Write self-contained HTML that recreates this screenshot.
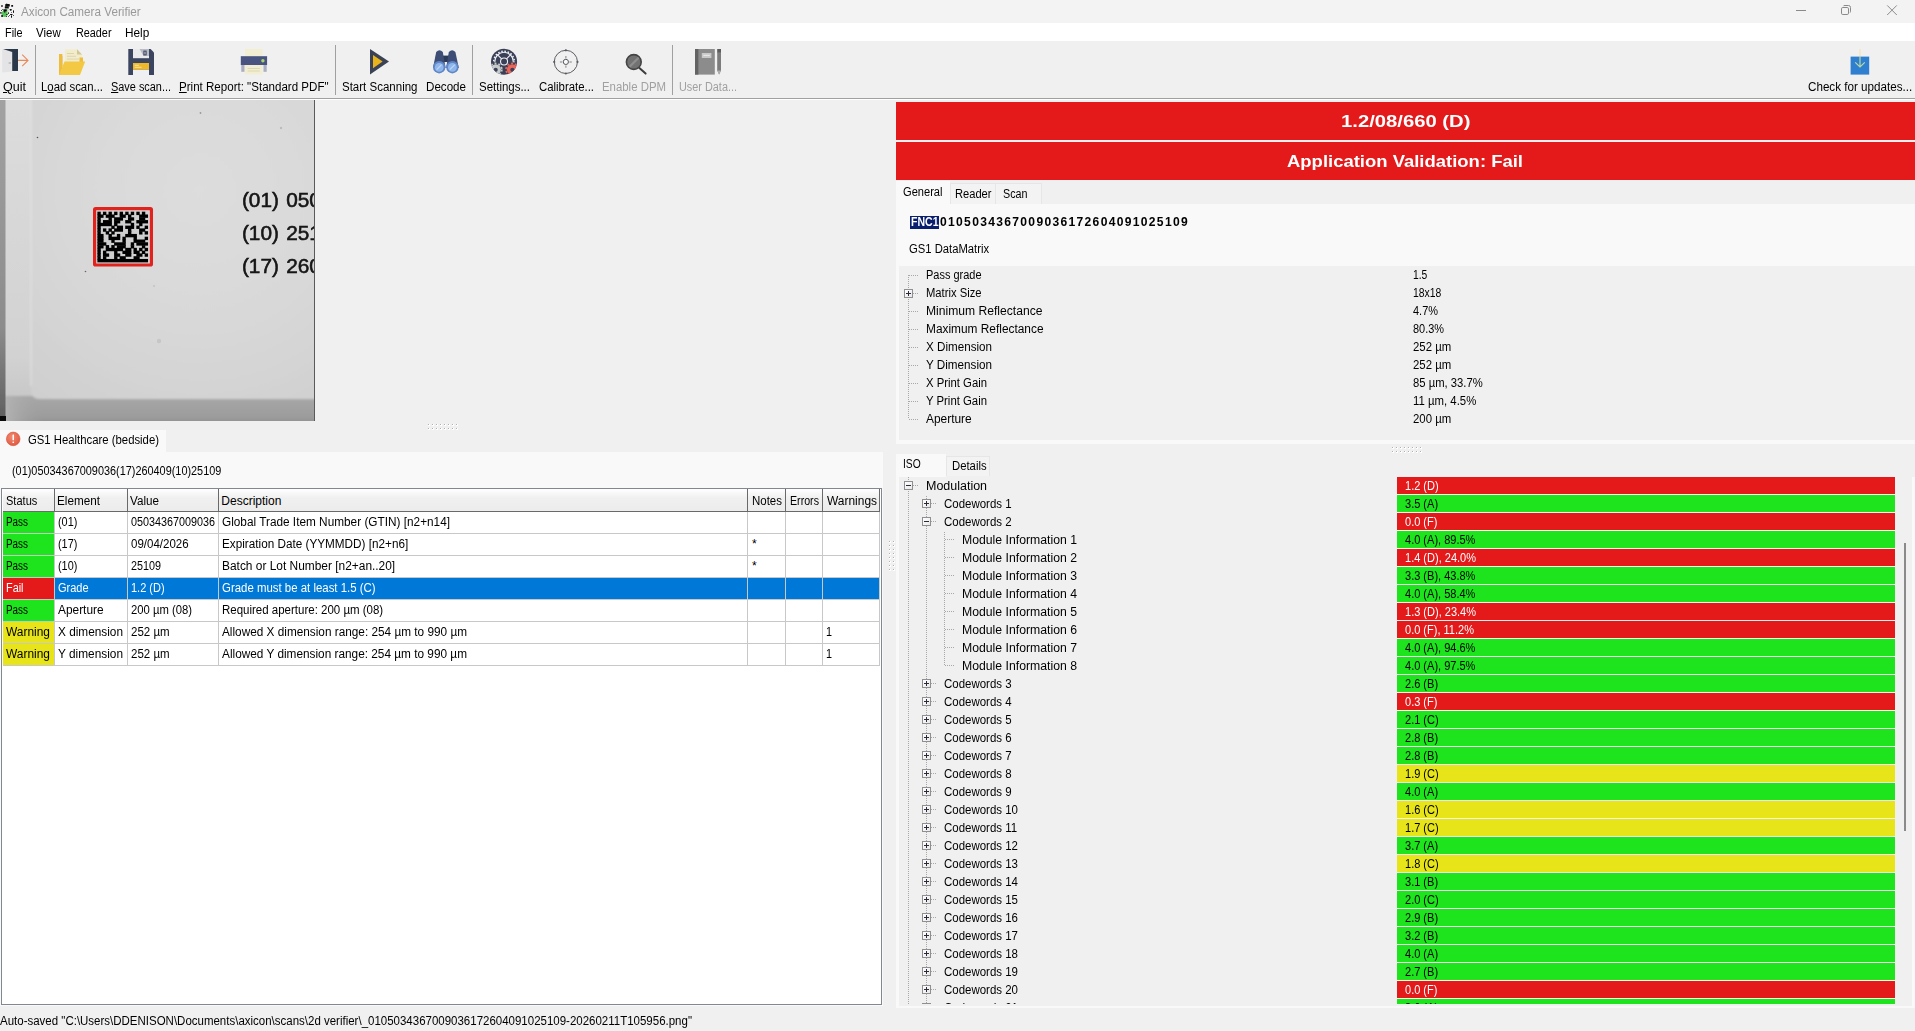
<!DOCTYPE html>
<html><head><meta charset="utf-8"><title>Axicon Camera Verifier</title>
<style>
html,body{margin:0;padding:0;}
body{width:1915px;height:1031px;overflow:hidden;background:#f0f0f0;font-family:"Liberation Sans", sans-serif;font-size:12px;position:relative;}
#app{position:absolute;left:0;top:0;width:1915px;height:1031px;overflow:hidden;}
#app div,#app span,#app svg{position:absolute;}
#app span{white-space:pre;line-height:16px;transform-origin:0 50%;}
#app u{text-decoration:underline;text-underline-offset:1px;}
</style></head><body><div id="app">
<div style="left:0px;top:0px;width:1915px;height:23px;background:#f3f3f3;"></div>
<div style="left:0px;top:23px;width:1915px;height:18px;background:#ffffff;"></div>
<div style="left:0px;top:41px;width:1915px;height:57px;background:#f0f0f0;"></div>
<div style="left:0px;top:98px;width:1915px;height:1px;background:#a0a0a0;"></div>
<div style="left:0px;top:99px;width:1915px;height:1px;background:#ffffff;"></div>
<div style="left:35px;top:45px;width:1px;height:50px;background:#a0a0a0;"></div>
<div style="left:335px;top:45px;width:1px;height:50px;background:#a0a0a0;"></div>
<div style="left:472px;top:45px;width:1px;height:50px;background:#a0a0a0;"></div>
<div style="left:672px;top:45px;width:1px;height:50px;background:#a0a0a0;"></div>
<div style="left:0px;top:430px;width:166px;height:22px;background:#f9f9f9;"></div>
<div style="left:0px;top:452px;width:883px;height:554px;background:#f9f9f9;"></div>
<div style="left:1px;top:488px;width:881px;height:517px;background:#ffffff;box-sizing:border-box;border:1px solid #828790;"></div>
<div style="left:3px;top:489px;width:877px;height:22px;background:linear-gradient(#ffffff,#f0f0f0 40%,#ececec);"></div>
<div style="left:3px;top:511px;width:877px;height:1px;background:#696969;"></div>
<div style="left:54px;top:489px;width:1px;height:22px;background:#696969;"></div>
<div style="left:127px;top:489px;width:1px;height:22px;background:#696969;"></div>
<div style="left:218px;top:489px;width:1px;height:22px;background:#696969;"></div>
<div style="left:747px;top:489px;width:1px;height:22px;background:#696969;"></div>
<div style="left:785px;top:489px;width:1px;height:22px;background:#696969;"></div>
<div style="left:822px;top:489px;width:1px;height:22px;background:#696969;"></div>
<div style="left:879px;top:489px;width:1px;height:22px;background:#696969;"></div>
<div style="left:3px;top:512px;width:51px;height:21px;background:#1de41d;"></div>
<div style="left:3px;top:533px;width:877px;height:1px;background:#c8c8c8;"></div>
<div style="left:3px;top:534px;width:51px;height:21px;background:#1de41d;"></div>
<div style="left:3px;top:555px;width:877px;height:1px;background:#c8c8c8;"></div>
<div style="left:3px;top:556px;width:51px;height:21px;background:#1de41d;"></div>
<div style="left:3px;top:577px;width:877px;height:1px;background:#c8c8c8;"></div>
<div style="left:54px;top:578px;width:826px;height:21px;background:#0078d7;"></div>
<div style="left:3px;top:578px;width:51px;height:21px;background:#e41a1a;"></div>
<div style="left:3px;top:599px;width:877px;height:1px;background:#c8c8c8;"></div>
<div style="left:3px;top:600px;width:51px;height:21px;background:#1de41d;"></div>
<div style="left:3px;top:621px;width:877px;height:1px;background:#c8c8c8;"></div>
<div style="left:3px;top:622px;width:51px;height:21px;background:#e8e41a;"></div>
<div style="left:3px;top:643px;width:877px;height:1px;background:#c8c8c8;"></div>
<div style="left:3px;top:644px;width:51px;height:21px;background:#e8e41a;"></div>
<div style="left:3px;top:665px;width:877px;height:1px;background:#c8c8c8;"></div>
<div style="left:54px;top:512px;width:1px;height:154px;background:#c8c8c8;"></div>
<div style="left:127px;top:512px;width:1px;height:154px;background:#c8c8c8;"></div>
<div style="left:218px;top:512px;width:1px;height:154px;background:#c8c8c8;"></div>
<div style="left:747px;top:512px;width:1px;height:154px;background:#c8c8c8;"></div>
<div style="left:785px;top:512px;width:1px;height:154px;background:#c8c8c8;"></div>
<div style="left:822px;top:512px;width:1px;height:154px;background:#c8c8c8;"></div>
<div style="left:879px;top:512px;width:1px;height:154px;background:#c8c8c8;"></div>
<div style="left:896px;top:102px;width:1019px;height:38px;background:#e41a1a;"></div>
<div style="left:896px;top:142.4px;width:1019px;height:38px;background:#e41a1a;"></div>
<div style="left:896px;top:181px;width:54px;height:23px;background:#f9f9f9;"></div>
<div style="left:896px;top:204px;width:1019px;height:240px;background:#f9f9f9;"></div>
<div style="left:899px;top:266px;width:1016px;height:174px;background:#f0f0f0;"></div>
<div style="left:950px;top:183px;width:46px;height:21px;background:#f3f3f3;box-sizing:border-box;border:1px solid #e6e6e6;border-bottom:none;"></div>
<div style="left:996px;top:183px;width:46px;height:21px;background:#f3f3f3;box-sizing:border-box;border:1px solid #e6e6e6;border-left:none;border-bottom:none;"></div>
<div style="left:946px;top:456px;width:44px;height:20px;background:#f3f3f3;box-sizing:border-box;border:1px solid #e6e6e6;border-bottom:none;"></div>
<div style="left:910px;top:216px;width:29px;height:13px;background:#0a1e6e;"></div>
<div style="left:896px;top:454px;width:50px;height:23px;background:#f9f9f9;"></div>
<div style="left:896px;top:477px;width:1019px;height:531px;background:#f9f9f9;"></div>
<div style="left:899px;top:477px;width:1013px;height:529px;background:#f0f0f0;"></div>
<div style="left:1397px;top:477px;width:498px;height:17px;background:#e41a1a;"></div>
<div style="left:1397px;top:495px;width:498px;height:17px;background:#1de41d;"></div>
<div style="left:1397px;top:513px;width:498px;height:17px;background:#e41a1a;"></div>
<div style="left:1397px;top:531px;width:498px;height:17px;background:#1de41d;"></div>
<div style="left:1397px;top:549px;width:498px;height:17px;background:#e41a1a;"></div>
<div style="left:1397px;top:567px;width:498px;height:17px;background:#1de41d;"></div>
<div style="left:1397px;top:585px;width:498px;height:17px;background:#1de41d;"></div>
<div style="left:1397px;top:603px;width:498px;height:17px;background:#e41a1a;"></div>
<div style="left:1397px;top:621px;width:498px;height:17px;background:#e41a1a;"></div>
<div style="left:1397px;top:639px;width:498px;height:17px;background:#1de41d;"></div>
<div style="left:1397px;top:657px;width:498px;height:17px;background:#1de41d;"></div>
<div style="left:1397px;top:675px;width:498px;height:17px;background:#1de41d;"></div>
<div style="left:1397px;top:693px;width:498px;height:17px;background:#e41a1a;"></div>
<div style="left:1397px;top:711px;width:498px;height:17px;background:#1de41d;"></div>
<div style="left:1397px;top:729px;width:498px;height:17px;background:#1de41d;"></div>
<div style="left:1397px;top:747px;width:498px;height:17px;background:#1de41d;"></div>
<div style="left:1397px;top:765px;width:498px;height:17px;background:#e8e41a;"></div>
<div style="left:1397px;top:783px;width:498px;height:17px;background:#1de41d;"></div>
<div style="left:1397px;top:801px;width:498px;height:17px;background:#e8e41a;"></div>
<div style="left:1397px;top:819px;width:498px;height:17px;background:#e8e41a;"></div>
<div style="left:1397px;top:837px;width:498px;height:17px;background:#1de41d;"></div>
<div style="left:1397px;top:855px;width:498px;height:17px;background:#e8e41a;"></div>
<div style="left:1397px;top:873px;width:498px;height:17px;background:#1de41d;"></div>
<div style="left:1397px;top:891px;width:498px;height:17px;background:#1de41d;"></div>
<div style="left:1397px;top:909px;width:498px;height:17px;background:#1de41d;"></div>
<div style="left:1397px;top:927px;width:498px;height:17px;background:#1de41d;"></div>
<div style="left:1397px;top:945px;width:498px;height:17px;background:#1de41d;"></div>
<div style="left:1397px;top:963px;width:498px;height:17px;background:#1de41d;"></div>
<div style="left:1397px;top:981px;width:498px;height:17px;background:#e41a1a;"></div>
<div style="left:1397px;top:999px;width:498px;height:5px;background:#1de41d;"></div>
<div style="left:1904px;top:543px;width:2px;height:288px;background:#8a8a8a;"></div>
<div style="left:0px;top:1006px;width:896px;height:25px;background:#f0f0f0;"></div>
<div style="left:896px;top:1008px;width:1019px;height:23px;background:#f0f0f0;"></div>
<div style="left:908px;top:275px;width:1px;height:144px;background:repeating-linear-gradient(to bottom,#a8a8a8 0 1px,transparent 1px 2px);"></div>
<div style="left:909px;top:275px;width:9px;height:1px;background:repeating-linear-gradient(to right,#a8a8a8 0 1px,transparent 1px 2px);"></div>
<div style="left:909px;top:293px;width:9px;height:1px;background:repeating-linear-gradient(to right,#a8a8a8 0 1px,transparent 1px 2px);"></div>
<div style="left:909px;top:311px;width:9px;height:1px;background:repeating-linear-gradient(to right,#a8a8a8 0 1px,transparent 1px 2px);"></div>
<div style="left:909px;top:329px;width:9px;height:1px;background:repeating-linear-gradient(to right,#a8a8a8 0 1px,transparent 1px 2px);"></div>
<div style="left:909px;top:347px;width:9px;height:1px;background:repeating-linear-gradient(to right,#a8a8a8 0 1px,transparent 1px 2px);"></div>
<div style="left:909px;top:365px;width:9px;height:1px;background:repeating-linear-gradient(to right,#a8a8a8 0 1px,transparent 1px 2px);"></div>
<div style="left:909px;top:383px;width:9px;height:1px;background:repeating-linear-gradient(to right,#a8a8a8 0 1px,transparent 1px 2px);"></div>
<div style="left:909px;top:401px;width:9px;height:1px;background:repeating-linear-gradient(to right,#a8a8a8 0 1px,transparent 1px 2px);"></div>
<div style="left:909px;top:419px;width:9px;height:1px;background:repeating-linear-gradient(to right,#a8a8a8 0 1px,transparent 1px 2px);"></div>
<div style="left:904px;top:289px;width:9px;height:9px;background:linear-gradient(135deg,#ffffff,#e8e8e8);box-sizing:border-box;border:1px solid #8f8f8f;"></div>
<div style="left:906px;top:293px;width:5px;height:1px;background:#2a2a3a;"></div>
<div style="left:908px;top:291px;width:1px;height:5px;background:#2a2a3a;"></div>
<div style="left:908px;top:477px;width:1px;height:527px;background:repeating-linear-gradient(to bottom,#a8a8a8 0 1px,transparent 1px 2px);"></div>
<div style="left:926px;top:496px;width:1px;height:508px;background:repeating-linear-gradient(to bottom,#a8a8a8 0 1px,transparent 1px 2px);"></div>
<div style="left:944px;top:532px;width:1px;height:134px;background:repeating-linear-gradient(to bottom,#a8a8a8 0 1px,transparent 1px 2px);"></div>
<div style="left:913px;top:485px;width:5px;height:1px;background:repeating-linear-gradient(to right,#a8a8a8 0 1px,transparent 1px 2px);"></div>
<div style="left:904px;top:481px;width:9px;height:9px;background:linear-gradient(135deg,#ffffff,#e8e8e8);box-sizing:border-box;border:1px solid #8f8f8f;"></div>
<div style="left:906px;top:485px;width:5px;height:1px;background:#2a2a3a;"></div>
<div style="left:931px;top:503px;width:5px;height:1px;background:repeating-linear-gradient(to right,#a8a8a8 0 1px,transparent 1px 2px);"></div>
<div style="left:922px;top:499px;width:9px;height:9px;background:linear-gradient(135deg,#ffffff,#e8e8e8);box-sizing:border-box;border:1px solid #8f8f8f;"></div>
<div style="left:924px;top:503px;width:5px;height:1px;background:#2a2a3a;"></div>
<div style="left:926px;top:501px;width:1px;height:5px;background:#2a2a3a;"></div>
<div style="left:931px;top:521px;width:5px;height:1px;background:repeating-linear-gradient(to right,#a8a8a8 0 1px,transparent 1px 2px);"></div>
<div style="left:922px;top:517px;width:9px;height:9px;background:linear-gradient(135deg,#ffffff,#e8e8e8);box-sizing:border-box;border:1px solid #8f8f8f;"></div>
<div style="left:924px;top:521px;width:5px;height:1px;background:#2a2a3a;"></div>
<div style="left:945px;top:539px;width:9px;height:1px;background:repeating-linear-gradient(to right,#a8a8a8 0 1px,transparent 1px 2px);"></div>
<div style="left:945px;top:557px;width:9px;height:1px;background:repeating-linear-gradient(to right,#a8a8a8 0 1px,transparent 1px 2px);"></div>
<div style="left:945px;top:575px;width:9px;height:1px;background:repeating-linear-gradient(to right,#a8a8a8 0 1px,transparent 1px 2px);"></div>
<div style="left:945px;top:593px;width:9px;height:1px;background:repeating-linear-gradient(to right,#a8a8a8 0 1px,transparent 1px 2px);"></div>
<div style="left:945px;top:611px;width:9px;height:1px;background:repeating-linear-gradient(to right,#a8a8a8 0 1px,transparent 1px 2px);"></div>
<div style="left:945px;top:629px;width:9px;height:1px;background:repeating-linear-gradient(to right,#a8a8a8 0 1px,transparent 1px 2px);"></div>
<div style="left:945px;top:647px;width:9px;height:1px;background:repeating-linear-gradient(to right,#a8a8a8 0 1px,transparent 1px 2px);"></div>
<div style="left:945px;top:665px;width:9px;height:1px;background:repeating-linear-gradient(to right,#a8a8a8 0 1px,transparent 1px 2px);"></div>
<div style="left:931px;top:683px;width:5px;height:1px;background:repeating-linear-gradient(to right,#a8a8a8 0 1px,transparent 1px 2px);"></div>
<div style="left:922px;top:679px;width:9px;height:9px;background:linear-gradient(135deg,#ffffff,#e8e8e8);box-sizing:border-box;border:1px solid #8f8f8f;"></div>
<div style="left:924px;top:683px;width:5px;height:1px;background:#2a2a3a;"></div>
<div style="left:926px;top:681px;width:1px;height:5px;background:#2a2a3a;"></div>
<div style="left:931px;top:701px;width:5px;height:1px;background:repeating-linear-gradient(to right,#a8a8a8 0 1px,transparent 1px 2px);"></div>
<div style="left:922px;top:697px;width:9px;height:9px;background:linear-gradient(135deg,#ffffff,#e8e8e8);box-sizing:border-box;border:1px solid #8f8f8f;"></div>
<div style="left:924px;top:701px;width:5px;height:1px;background:#2a2a3a;"></div>
<div style="left:926px;top:699px;width:1px;height:5px;background:#2a2a3a;"></div>
<div style="left:931px;top:719px;width:5px;height:1px;background:repeating-linear-gradient(to right,#a8a8a8 0 1px,transparent 1px 2px);"></div>
<div style="left:922px;top:715px;width:9px;height:9px;background:linear-gradient(135deg,#ffffff,#e8e8e8);box-sizing:border-box;border:1px solid #8f8f8f;"></div>
<div style="left:924px;top:719px;width:5px;height:1px;background:#2a2a3a;"></div>
<div style="left:926px;top:717px;width:1px;height:5px;background:#2a2a3a;"></div>
<div style="left:931px;top:737px;width:5px;height:1px;background:repeating-linear-gradient(to right,#a8a8a8 0 1px,transparent 1px 2px);"></div>
<div style="left:922px;top:733px;width:9px;height:9px;background:linear-gradient(135deg,#ffffff,#e8e8e8);box-sizing:border-box;border:1px solid #8f8f8f;"></div>
<div style="left:924px;top:737px;width:5px;height:1px;background:#2a2a3a;"></div>
<div style="left:926px;top:735px;width:1px;height:5px;background:#2a2a3a;"></div>
<div style="left:931px;top:755px;width:5px;height:1px;background:repeating-linear-gradient(to right,#a8a8a8 0 1px,transparent 1px 2px);"></div>
<div style="left:922px;top:751px;width:9px;height:9px;background:linear-gradient(135deg,#ffffff,#e8e8e8);box-sizing:border-box;border:1px solid #8f8f8f;"></div>
<div style="left:924px;top:755px;width:5px;height:1px;background:#2a2a3a;"></div>
<div style="left:926px;top:753px;width:1px;height:5px;background:#2a2a3a;"></div>
<div style="left:931px;top:773px;width:5px;height:1px;background:repeating-linear-gradient(to right,#a8a8a8 0 1px,transparent 1px 2px);"></div>
<div style="left:922px;top:769px;width:9px;height:9px;background:linear-gradient(135deg,#ffffff,#e8e8e8);box-sizing:border-box;border:1px solid #8f8f8f;"></div>
<div style="left:924px;top:773px;width:5px;height:1px;background:#2a2a3a;"></div>
<div style="left:926px;top:771px;width:1px;height:5px;background:#2a2a3a;"></div>
<div style="left:931px;top:791px;width:5px;height:1px;background:repeating-linear-gradient(to right,#a8a8a8 0 1px,transparent 1px 2px);"></div>
<div style="left:922px;top:787px;width:9px;height:9px;background:linear-gradient(135deg,#ffffff,#e8e8e8);box-sizing:border-box;border:1px solid #8f8f8f;"></div>
<div style="left:924px;top:791px;width:5px;height:1px;background:#2a2a3a;"></div>
<div style="left:926px;top:789px;width:1px;height:5px;background:#2a2a3a;"></div>
<div style="left:931px;top:809px;width:5px;height:1px;background:repeating-linear-gradient(to right,#a8a8a8 0 1px,transparent 1px 2px);"></div>
<div style="left:922px;top:805px;width:9px;height:9px;background:linear-gradient(135deg,#ffffff,#e8e8e8);box-sizing:border-box;border:1px solid #8f8f8f;"></div>
<div style="left:924px;top:809px;width:5px;height:1px;background:#2a2a3a;"></div>
<div style="left:926px;top:807px;width:1px;height:5px;background:#2a2a3a;"></div>
<div style="left:931px;top:827px;width:5px;height:1px;background:repeating-linear-gradient(to right,#a8a8a8 0 1px,transparent 1px 2px);"></div>
<div style="left:922px;top:823px;width:9px;height:9px;background:linear-gradient(135deg,#ffffff,#e8e8e8);box-sizing:border-box;border:1px solid #8f8f8f;"></div>
<div style="left:924px;top:827px;width:5px;height:1px;background:#2a2a3a;"></div>
<div style="left:926px;top:825px;width:1px;height:5px;background:#2a2a3a;"></div>
<div style="left:931px;top:845px;width:5px;height:1px;background:repeating-linear-gradient(to right,#a8a8a8 0 1px,transparent 1px 2px);"></div>
<div style="left:922px;top:841px;width:9px;height:9px;background:linear-gradient(135deg,#ffffff,#e8e8e8);box-sizing:border-box;border:1px solid #8f8f8f;"></div>
<div style="left:924px;top:845px;width:5px;height:1px;background:#2a2a3a;"></div>
<div style="left:926px;top:843px;width:1px;height:5px;background:#2a2a3a;"></div>
<div style="left:931px;top:863px;width:5px;height:1px;background:repeating-linear-gradient(to right,#a8a8a8 0 1px,transparent 1px 2px);"></div>
<div style="left:922px;top:859px;width:9px;height:9px;background:linear-gradient(135deg,#ffffff,#e8e8e8);box-sizing:border-box;border:1px solid #8f8f8f;"></div>
<div style="left:924px;top:863px;width:5px;height:1px;background:#2a2a3a;"></div>
<div style="left:926px;top:861px;width:1px;height:5px;background:#2a2a3a;"></div>
<div style="left:931px;top:881px;width:5px;height:1px;background:repeating-linear-gradient(to right,#a8a8a8 0 1px,transparent 1px 2px);"></div>
<div style="left:922px;top:877px;width:9px;height:9px;background:linear-gradient(135deg,#ffffff,#e8e8e8);box-sizing:border-box;border:1px solid #8f8f8f;"></div>
<div style="left:924px;top:881px;width:5px;height:1px;background:#2a2a3a;"></div>
<div style="left:926px;top:879px;width:1px;height:5px;background:#2a2a3a;"></div>
<div style="left:931px;top:899px;width:5px;height:1px;background:repeating-linear-gradient(to right,#a8a8a8 0 1px,transparent 1px 2px);"></div>
<div style="left:922px;top:895px;width:9px;height:9px;background:linear-gradient(135deg,#ffffff,#e8e8e8);box-sizing:border-box;border:1px solid #8f8f8f;"></div>
<div style="left:924px;top:899px;width:5px;height:1px;background:#2a2a3a;"></div>
<div style="left:926px;top:897px;width:1px;height:5px;background:#2a2a3a;"></div>
<div style="left:931px;top:917px;width:5px;height:1px;background:repeating-linear-gradient(to right,#a8a8a8 0 1px,transparent 1px 2px);"></div>
<div style="left:922px;top:913px;width:9px;height:9px;background:linear-gradient(135deg,#ffffff,#e8e8e8);box-sizing:border-box;border:1px solid #8f8f8f;"></div>
<div style="left:924px;top:917px;width:5px;height:1px;background:#2a2a3a;"></div>
<div style="left:926px;top:915px;width:1px;height:5px;background:#2a2a3a;"></div>
<div style="left:931px;top:935px;width:5px;height:1px;background:repeating-linear-gradient(to right,#a8a8a8 0 1px,transparent 1px 2px);"></div>
<div style="left:922px;top:931px;width:9px;height:9px;background:linear-gradient(135deg,#ffffff,#e8e8e8);box-sizing:border-box;border:1px solid #8f8f8f;"></div>
<div style="left:924px;top:935px;width:5px;height:1px;background:#2a2a3a;"></div>
<div style="left:926px;top:933px;width:1px;height:5px;background:#2a2a3a;"></div>
<div style="left:931px;top:953px;width:5px;height:1px;background:repeating-linear-gradient(to right,#a8a8a8 0 1px,transparent 1px 2px);"></div>
<div style="left:922px;top:949px;width:9px;height:9px;background:linear-gradient(135deg,#ffffff,#e8e8e8);box-sizing:border-box;border:1px solid #8f8f8f;"></div>
<div style="left:924px;top:953px;width:5px;height:1px;background:#2a2a3a;"></div>
<div style="left:926px;top:951px;width:1px;height:5px;background:#2a2a3a;"></div>
<div style="left:931px;top:971px;width:5px;height:1px;background:repeating-linear-gradient(to right,#a8a8a8 0 1px,transparent 1px 2px);"></div>
<div style="left:922px;top:967px;width:9px;height:9px;background:linear-gradient(135deg,#ffffff,#e8e8e8);box-sizing:border-box;border:1px solid #8f8f8f;"></div>
<div style="left:924px;top:971px;width:5px;height:1px;background:#2a2a3a;"></div>
<div style="left:926px;top:969px;width:1px;height:5px;background:#2a2a3a;"></div>
<div style="left:931px;top:989px;width:5px;height:1px;background:repeating-linear-gradient(to right,#a8a8a8 0 1px,transparent 1px 2px);"></div>
<div style="left:922px;top:985px;width:9px;height:9px;background:linear-gradient(135deg,#ffffff,#e8e8e8);box-sizing:border-box;border:1px solid #8f8f8f;"></div>
<div style="left:924px;top:989px;width:5px;height:1px;background:#2a2a3a;"></div>
<div style="left:926px;top:987px;width:1px;height:5px;background:#2a2a3a;"></div>
<div style="left:428px;top:424px;width:2px;height:2px;background:#ffffff;"></div>
<div style="left:428px;top:424px;width:1px;height:1px;background:#b0b0b0;"></div>
<div style="left:428px;top:428px;width:2px;height:2px;background:#ffffff;"></div>
<div style="left:428px;top:428px;width:1px;height:1px;background:#b0b0b0;"></div>
<div style="left:1392px;top:447px;width:2px;height:2px;background:#ffffff;"></div>
<div style="left:1392px;top:447px;width:1px;height:1px;background:#b0b0b0;"></div>
<div style="left:1392px;top:451px;width:2px;height:2px;background:#ffffff;"></div>
<div style="left:1392px;top:451px;width:1px;height:1px;background:#b0b0b0;"></div>
<div style="left:889px;top:541px;width:2px;height:2px;background:#ffffff;"></div>
<div style="left:889px;top:541px;width:1px;height:1px;background:#b0b0b0;"></div>
<div style="left:893px;top:541px;width:2px;height:2px;background:#ffffff;"></div>
<div style="left:893px;top:541px;width:1px;height:1px;background:#b0b0b0;"></div>
<div style="left:432px;top:424px;width:2px;height:2px;background:#ffffff;"></div>
<div style="left:432px;top:424px;width:1px;height:1px;background:#b0b0b0;"></div>
<div style="left:432px;top:428px;width:2px;height:2px;background:#ffffff;"></div>
<div style="left:432px;top:428px;width:1px;height:1px;background:#b0b0b0;"></div>
<div style="left:1396px;top:447px;width:2px;height:2px;background:#ffffff;"></div>
<div style="left:1396px;top:447px;width:1px;height:1px;background:#b0b0b0;"></div>
<div style="left:1396px;top:451px;width:2px;height:2px;background:#ffffff;"></div>
<div style="left:1396px;top:451px;width:1px;height:1px;background:#b0b0b0;"></div>
<div style="left:889px;top:545px;width:2px;height:2px;background:#ffffff;"></div>
<div style="left:889px;top:545px;width:1px;height:1px;background:#b0b0b0;"></div>
<div style="left:893px;top:545px;width:2px;height:2px;background:#ffffff;"></div>
<div style="left:893px;top:545px;width:1px;height:1px;background:#b0b0b0;"></div>
<div style="left:436px;top:424px;width:2px;height:2px;background:#ffffff;"></div>
<div style="left:436px;top:424px;width:1px;height:1px;background:#b0b0b0;"></div>
<div style="left:436px;top:428px;width:2px;height:2px;background:#ffffff;"></div>
<div style="left:436px;top:428px;width:1px;height:1px;background:#b0b0b0;"></div>
<div style="left:1400px;top:447px;width:2px;height:2px;background:#ffffff;"></div>
<div style="left:1400px;top:447px;width:1px;height:1px;background:#b0b0b0;"></div>
<div style="left:1400px;top:451px;width:2px;height:2px;background:#ffffff;"></div>
<div style="left:1400px;top:451px;width:1px;height:1px;background:#b0b0b0;"></div>
<div style="left:889px;top:549px;width:2px;height:2px;background:#ffffff;"></div>
<div style="left:889px;top:549px;width:1px;height:1px;background:#b0b0b0;"></div>
<div style="left:893px;top:549px;width:2px;height:2px;background:#ffffff;"></div>
<div style="left:893px;top:549px;width:1px;height:1px;background:#b0b0b0;"></div>
<div style="left:440px;top:424px;width:2px;height:2px;background:#ffffff;"></div>
<div style="left:440px;top:424px;width:1px;height:1px;background:#b0b0b0;"></div>
<div style="left:440px;top:428px;width:2px;height:2px;background:#ffffff;"></div>
<div style="left:440px;top:428px;width:1px;height:1px;background:#b0b0b0;"></div>
<div style="left:1404px;top:447px;width:2px;height:2px;background:#ffffff;"></div>
<div style="left:1404px;top:447px;width:1px;height:1px;background:#b0b0b0;"></div>
<div style="left:1404px;top:451px;width:2px;height:2px;background:#ffffff;"></div>
<div style="left:1404px;top:451px;width:1px;height:1px;background:#b0b0b0;"></div>
<div style="left:889px;top:553px;width:2px;height:2px;background:#ffffff;"></div>
<div style="left:889px;top:553px;width:1px;height:1px;background:#b0b0b0;"></div>
<div style="left:893px;top:553px;width:2px;height:2px;background:#ffffff;"></div>
<div style="left:893px;top:553px;width:1px;height:1px;background:#b0b0b0;"></div>
<div style="left:444px;top:424px;width:2px;height:2px;background:#ffffff;"></div>
<div style="left:444px;top:424px;width:1px;height:1px;background:#b0b0b0;"></div>
<div style="left:444px;top:428px;width:2px;height:2px;background:#ffffff;"></div>
<div style="left:444px;top:428px;width:1px;height:1px;background:#b0b0b0;"></div>
<div style="left:1408px;top:447px;width:2px;height:2px;background:#ffffff;"></div>
<div style="left:1408px;top:447px;width:1px;height:1px;background:#b0b0b0;"></div>
<div style="left:1408px;top:451px;width:2px;height:2px;background:#ffffff;"></div>
<div style="left:1408px;top:451px;width:1px;height:1px;background:#b0b0b0;"></div>
<div style="left:889px;top:557px;width:2px;height:2px;background:#ffffff;"></div>
<div style="left:889px;top:557px;width:1px;height:1px;background:#b0b0b0;"></div>
<div style="left:893px;top:557px;width:2px;height:2px;background:#ffffff;"></div>
<div style="left:893px;top:557px;width:1px;height:1px;background:#b0b0b0;"></div>
<div style="left:448px;top:424px;width:2px;height:2px;background:#ffffff;"></div>
<div style="left:448px;top:424px;width:1px;height:1px;background:#b0b0b0;"></div>
<div style="left:448px;top:428px;width:2px;height:2px;background:#ffffff;"></div>
<div style="left:448px;top:428px;width:1px;height:1px;background:#b0b0b0;"></div>
<div style="left:1412px;top:447px;width:2px;height:2px;background:#ffffff;"></div>
<div style="left:1412px;top:447px;width:1px;height:1px;background:#b0b0b0;"></div>
<div style="left:1412px;top:451px;width:2px;height:2px;background:#ffffff;"></div>
<div style="left:1412px;top:451px;width:1px;height:1px;background:#b0b0b0;"></div>
<div style="left:889px;top:561px;width:2px;height:2px;background:#ffffff;"></div>
<div style="left:889px;top:561px;width:1px;height:1px;background:#b0b0b0;"></div>
<div style="left:893px;top:561px;width:2px;height:2px;background:#ffffff;"></div>
<div style="left:893px;top:561px;width:1px;height:1px;background:#b0b0b0;"></div>
<div style="left:452px;top:424px;width:2px;height:2px;background:#ffffff;"></div>
<div style="left:452px;top:424px;width:1px;height:1px;background:#b0b0b0;"></div>
<div style="left:452px;top:428px;width:2px;height:2px;background:#ffffff;"></div>
<div style="left:452px;top:428px;width:1px;height:1px;background:#b0b0b0;"></div>
<div style="left:1416px;top:447px;width:2px;height:2px;background:#ffffff;"></div>
<div style="left:1416px;top:447px;width:1px;height:1px;background:#b0b0b0;"></div>
<div style="left:1416px;top:451px;width:2px;height:2px;background:#ffffff;"></div>
<div style="left:1416px;top:451px;width:1px;height:1px;background:#b0b0b0;"></div>
<div style="left:889px;top:565px;width:2px;height:2px;background:#ffffff;"></div>
<div style="left:889px;top:565px;width:1px;height:1px;background:#b0b0b0;"></div>
<div style="left:893px;top:565px;width:2px;height:2px;background:#ffffff;"></div>
<div style="left:893px;top:565px;width:1px;height:1px;background:#b0b0b0;"></div>
<div style="left:456px;top:424px;width:2px;height:2px;background:#ffffff;"></div>
<div style="left:456px;top:424px;width:1px;height:1px;background:#b0b0b0;"></div>
<div style="left:456px;top:428px;width:2px;height:2px;background:#ffffff;"></div>
<div style="left:456px;top:428px;width:1px;height:1px;background:#b0b0b0;"></div>
<div style="left:1420px;top:447px;width:2px;height:2px;background:#ffffff;"></div>
<div style="left:1420px;top:447px;width:1px;height:1px;background:#b0b0b0;"></div>
<div style="left:1420px;top:451px;width:2px;height:2px;background:#ffffff;"></div>
<div style="left:1420px;top:451px;width:1px;height:1px;background:#b0b0b0;"></div>
<div style="left:889px;top:569px;width:2px;height:2px;background:#ffffff;"></div>
<div style="left:889px;top:569px;width:1px;height:1px;background:#b0b0b0;"></div>
<div style="left:893px;top:569px;width:2px;height:2px;background:#ffffff;"></div>
<div style="left:893px;top:569px;width:1px;height:1px;background:#b0b0b0;"></div>
<div style="left:922px;top:1003px;width:9px;height:1px;background:#8f8f8f;"></div>
<svg style="left:0px;top:100px" width="315" height="321" viewBox="0 100 315 321"><defs><radialGradient id="gl" gradientUnits="userSpaceOnUse" cx="200" cy="190" r="260"><stop offset="0" stop-color="#dddddd"/><stop offset="0.55" stop-color="#d8d8d8"/><stop offset="1" stop-color="#cfcfcf"/></radialGradient><linearGradient id="gbk" x1="0" x2="0" y1="0" y2="1"><stop offset="0" stop-color="#dcdcdc"/><stop offset="0.8" stop-color="#d2d2d2"/><stop offset="1" stop-color="#c2c2c2"/></linearGradient><linearGradient id="gs" x1="0" x2="0" y1="0" y2="1"><stop offset="0" stop-color="#a2a2a2"/><stop offset="0.7" stop-color="#8c8c8c"/><stop offset="1" stop-color="#5c5c5c"/></linearGradient><linearGradient id="gb" x1="0" x2="0" y1="0" y2="1"><stop offset="0" stop-color="#a8a8a8"/><stop offset="0.7" stop-color="#9c9c9c"/><stop offset="1" stop-color="#8a8a8a"/></linearGradient><linearGradient id="gbl" x1="0" x2="1" y1="0" y2="0"><stop offset="0" stop-color="#b4b4b4" stop-opacity="1"/><stop offset="1" stop-color="#a0a0a0" stop-opacity="0"/></linearGradient><filter id="b1" x="-5%" y="-5%" width="110%" height="110%"><feGaussianBlur stdDeviation="0.55"/></filter><filter id="b2" x="-5%" y="-5%" width="110%" height="110%"><feGaussianBlur stdDeviation="0.75"/></filter><filter id="b3"><feGaussianBlur stdDeviation="1.2"/></filter></defs><rect x="0" y="100" width="315" height="321" fill="url(#gbk)"/><g filter="url(#b3)"><rect x="-4" y="396" width="325" height="30" fill="url(#gb)"/><rect x="4" y="396" width="40" height="30" fill="url(#gbl)"/><path d="M31 96 H320 V399 H40 Q31 399 31 390 Z" fill="url(#gl)"/><rect x="30.5" y="96" width="1" height="290" fill="#e6e6e6"/></g><rect x="-2" y="96" width="7.5" height="330" fill="url(#gs)" filter="url(#b2)"/><rect x="0" y="416" width="6" height="5" fill="#0a0a0a"/><circle cx="37.5" cy="137.5" r="0.8" fill="#555" filter="url(#b1)"/><circle cx="200.5" cy="113" r="0.9" fill="#999" filter="url(#b1)"/><circle cx="281" cy="128" r="1.2" fill="#bbb" filter="url(#b1)"/><circle cx="85.5" cy="271.5" r="0.8" fill="#666" filter="url(#b1)"/><circle cx="154" cy="286" r="0.7" fill="#aaa" filter="url(#b1)"/><circle cx="159" cy="341" r="2.2" fill="#c6c6c6" filter="url(#b1)"/><g filter="url(#b2)"><rect x="96.7" y="211.0" width="52.04" height="52.04" fill="#cfcfcf"/><rect x="97.40" y="211.70" width="3.38" height="3.38" fill="#050505"/><rect x="102.96" y="211.70" width="3.38" height="3.38" fill="#050505"/><rect x="108.52" y="211.70" width="3.38" height="3.38" fill="#050505"/><rect x="114.08" y="211.70" width="3.38" height="3.38" fill="#050505"/><rect x="119.64" y="211.70" width="3.38" height="3.38" fill="#050505"/><rect x="125.20" y="211.70" width="3.38" height="3.38" fill="#050505"/><rect x="130.76" y="211.70" width="3.38" height="3.38" fill="#050505"/><rect x="136.32" y="211.70" width="3.38" height="3.38" fill="#050505"/><rect x="141.88" y="211.70" width="3.38" height="3.38" fill="#050505"/><rect x="97.40" y="214.48" width="6.16" height="3.38" fill="#050505"/><rect x="105.74" y="214.48" width="8.94" height="3.38" fill="#050505"/><rect x="119.64" y="214.48" width="6.16" height="3.38" fill="#050505"/><rect x="127.98" y="214.48" width="3.38" height="3.38" fill="#050505"/><rect x="139.10" y="214.48" width="8.94" height="3.38" fill="#050505"/><rect x="97.40" y="217.26" width="3.38" height="3.38" fill="#050505"/><rect x="108.52" y="217.26" width="3.38" height="3.38" fill="#050505"/><rect x="114.08" y="217.26" width="8.94" height="3.38" fill="#050505"/><rect x="127.98" y="217.26" width="6.16" height="3.38" fill="#050505"/><rect x="139.10" y="217.26" width="6.16" height="3.38" fill="#050505"/><rect x="97.40" y="220.04" width="3.38" height="3.38" fill="#050505"/><rect x="102.96" y="220.04" width="8.94" height="3.38" fill="#050505"/><rect x="114.08" y="220.04" width="6.16" height="3.38" fill="#050505"/><rect x="125.20" y="220.04" width="6.16" height="3.38" fill="#050505"/><rect x="136.32" y="220.04" width="11.72" height="3.38" fill="#050505"/><rect x="97.40" y="222.82" width="14.50" height="3.38" fill="#050505"/><rect x="114.08" y="222.82" width="3.38" height="3.38" fill="#050505"/><rect x="130.76" y="222.82" width="3.38" height="3.38" fill="#050505"/><rect x="139.10" y="222.82" width="3.38" height="3.38" fill="#050505"/><rect x="97.40" y="225.60" width="3.38" height="3.38" fill="#050505"/><rect x="111.30" y="225.60" width="3.38" height="3.38" fill="#050505"/><rect x="116.86" y="225.60" width="6.16" height="3.38" fill="#050505"/><rect x="125.20" y="225.60" width="8.94" height="3.38" fill="#050505"/><rect x="136.32" y="225.60" width="3.38" height="3.38" fill="#050505"/><rect x="144.66" y="225.60" width="3.38" height="3.38" fill="#050505"/><rect x="97.40" y="228.38" width="3.38" height="3.38" fill="#050505"/><rect x="102.96" y="228.38" width="3.38" height="3.38" fill="#050505"/><rect x="108.52" y="228.38" width="3.38" height="3.38" fill="#050505"/><rect x="114.08" y="228.38" width="8.94" height="3.38" fill="#050505"/><rect x="127.98" y="228.38" width="3.38" height="3.38" fill="#050505"/><rect x="139.10" y="228.38" width="6.16" height="3.38" fill="#050505"/><rect x="97.40" y="231.16" width="3.38" height="3.38" fill="#050505"/><rect x="105.74" y="231.16" width="3.38" height="3.38" fill="#050505"/><rect x="111.30" y="231.16" width="3.38" height="3.38" fill="#050505"/><rect x="127.98" y="231.16" width="3.38" height="3.38" fill="#050505"/><rect x="139.10" y="231.16" width="3.38" height="3.38" fill="#050505"/><rect x="144.66" y="231.16" width="3.38" height="3.38" fill="#050505"/><rect x="97.40" y="233.94" width="6.16" height="3.38" fill="#050505"/><rect x="108.52" y="233.94" width="3.38" height="3.38" fill="#050505"/><rect x="116.86" y="233.94" width="3.38" height="3.38" fill="#050505"/><rect x="125.20" y="233.94" width="11.72" height="3.38" fill="#050505"/><rect x="97.40" y="236.72" width="6.16" height="3.38" fill="#050505"/><rect x="108.52" y="236.72" width="11.72" height="3.38" fill="#050505"/><rect x="122.42" y="236.72" width="3.38" height="3.38" fill="#050505"/><rect x="133.54" y="236.72" width="3.38" height="3.38" fill="#050505"/><rect x="144.66" y="236.72" width="3.38" height="3.38" fill="#050505"/><rect x="97.40" y="239.50" width="6.16" height="3.38" fill="#050505"/><rect x="111.30" y="239.50" width="3.38" height="3.38" fill="#050505"/><rect x="122.42" y="239.50" width="3.38" height="3.38" fill="#050505"/><rect x="133.54" y="239.50" width="11.72" height="3.38" fill="#050505"/><rect x="97.40" y="242.28" width="8.94" height="3.38" fill="#050505"/><rect x="114.08" y="242.28" width="11.72" height="3.38" fill="#050505"/><rect x="130.76" y="242.28" width="3.38" height="3.38" fill="#050505"/><rect x="136.32" y="242.28" width="11.72" height="3.38" fill="#050505"/><rect x="97.40" y="245.06" width="6.16" height="3.38" fill="#050505"/><rect x="105.74" y="245.06" width="3.38" height="3.38" fill="#050505"/><rect x="111.30" y="245.06" width="3.38" height="3.38" fill="#050505"/><rect x="116.86" y="245.06" width="8.94" height="3.38" fill="#050505"/><rect x="130.76" y="245.06" width="3.38" height="3.38" fill="#050505"/><rect x="141.88" y="245.06" width="3.38" height="3.38" fill="#050505"/><rect x="97.40" y="247.84" width="3.38" height="3.38" fill="#050505"/><rect x="105.74" y="247.84" width="17.28" height="3.38" fill="#050505"/><rect x="125.20" y="247.84" width="6.16" height="3.38" fill="#050505"/><rect x="133.54" y="247.84" width="3.38" height="3.38" fill="#050505"/><rect x="139.10" y="247.84" width="3.38" height="3.38" fill="#050505"/><rect x="144.66" y="247.84" width="3.38" height="3.38" fill="#050505"/><rect x="97.40" y="250.62" width="3.38" height="3.38" fill="#050505"/><rect x="102.96" y="250.62" width="3.38" height="3.38" fill="#050505"/><rect x="114.08" y="250.62" width="3.38" height="3.38" fill="#050505"/><rect x="122.42" y="250.62" width="8.94" height="3.38" fill="#050505"/><rect x="133.54" y="250.62" width="6.16" height="3.38" fill="#050505"/><rect x="141.88" y="250.62" width="3.38" height="3.38" fill="#050505"/><rect x="97.40" y="253.40" width="3.38" height="3.38" fill="#050505"/><rect x="102.96" y="253.40" width="6.16" height="3.38" fill="#050505"/><rect x="114.08" y="253.40" width="6.16" height="3.38" fill="#050505"/><rect x="125.20" y="253.40" width="6.16" height="3.38" fill="#050505"/><rect x="136.32" y="253.40" width="6.16" height="3.38" fill="#050505"/><rect x="144.66" y="253.40" width="3.38" height="3.38" fill="#050505"/><rect x="97.40" y="256.18" width="3.38" height="3.38" fill="#050505"/><rect x="102.96" y="256.18" width="3.38" height="3.38" fill="#050505"/><rect x="114.08" y="256.18" width="3.38" height="3.38" fill="#050505"/><rect x="119.64" y="256.18" width="6.16" height="3.38" fill="#050505"/><rect x="133.54" y="256.18" width="6.16" height="3.38" fill="#050505"/><rect x="97.40" y="258.96" width="50.64" height="3.38" fill="#050505"/></g><rect x="94.6" y="208.6" width="56.8" height="56.4" fill="none" stroke="#e2201e" stroke-width="3.2" rx="1" filter="url(#b1)"/><g filter="url(#b1)" font-family="Liberation Sans, sans-serif" font-size="20.8" fill="#141414" stroke="#141414" stroke-width="0.55"><text x="241.9" y="207.0">(01)</text><text x="286.2" y="207.0">0500</text><text x="241.9" y="239.8">(10)</text><text x="286.2" y="239.8">2510</text><text x="241.9" y="272.7">(17)</text><text x="286.2" y="272.7">2600</text></g><rect x="314" y="100" width="1" height="321" fill="#5a5a5a"/></svg>
<svg style="left:0;top:0" width="1915" height="100" viewBox="0 0 1915 100"><defs><filter id="ib"><feGaussianBlur stdDeviation="0.35"/></filter></defs><g filter="url(#ib)"><circle cx="4.6" cy="13.8" r="3.1" fill="#56c45a"/><circle cx="6.8" cy="10.6" r="1.8" fill="#8fd28f" opacity="0.7"/><rect x="1.1" y="5.2" width="1.7" height="1.6" rx="0.4" fill="#0c0c0c"/><rect x="5.2" y="4.0" width="4.6" height="2.6" rx="0.4" fill="#0c0c0c"/><rect x="4.8" y="6.2" width="4.0" height="2.4" rx="0.4" fill="#0c0c0c"/><rect x="6.2" y="3.6" width="1.2" height="1.0" rx="0.4" fill="#0c0c0c"/><rect x="11.2" y="4.9" width="1.9" height="1.9" rx="0.4" fill="#0c0c0c"/><rect x="1.0" y="9.9" width="1.0" height="1.0" rx="0.4" fill="#0c0c0c"/><rect x="2.3" y="9.0" width="1.0" height="1.0" rx="0.4" fill="#0c0c0c"/><rect x="3.4" y="9.2" width="3.4" height="2.2" rx="0.4" fill="#0c0c0c"/><rect x="4.0" y="11.2" width="1.4" height="1.4" rx="0.4" fill="#0c0c0c"/><rect x="9.6" y="9.0" width="2.2" height="1.2" rx="0.4" fill="#0c0c0c"/><rect x="10.2" y="10.0" width="1.2" height="1.0" rx="0.4" fill="#0c0c0c"/><rect x="13.0" y="10.0" width="1.0" height="3.0" rx="0.4" fill="#0c0c0c"/><rect x="0" y="12.2" width="1.7" height="1.4" rx="0.4" fill="#0c0c0c"/><rect x="8.0" y="12.0" width="1.0" height="1.9" rx="0.4" fill="#0c0c0c"/><rect x="11.1" y="11.9" width="0.9" height="0.9" rx="0.4" fill="#0c0c0c"/><rect x="1.2" y="15.0" width="1.7" height="2.0" rx="0.4" fill="#0c0c0c"/><rect x="6.2" y="14.0" width="1.4" height="1.1" rx="0.4" fill="#0c0c0c"/><rect x="5.9" y="16.0" width="1.1" height="1.0" rx="0.4" fill="#0c0c0c"/><rect x="8.0" y="16.0" width="1.0" height="1.0" rx="0.4" fill="#0c0c0c"/><rect x="9.0" y="15.0" width="1.0" height="1.0" rx="0.4" fill="#0c0c0c"/><rect x="10.0" y="14.1" width="2.6" height="1.0" rx="0.4" fill="#0c0c0c"/><rect x="11.0" y="15.0" width="1.0" height="2.8" rx="0.4" fill="#0c0c0c"/><rect x="13.0" y="15.0" width="1.0" height="1.0" rx="0.4" fill="#0c0c0c"/></g><path d="M1796 10.5 H1806" stroke="#8a8a8a" stroke-width="1" fill="none"/><rect x="1841.5" y="7.5" width="7" height="7" rx="1.3" fill="none" stroke="#8a8a8a" stroke-width="1"/><path d="M1843.5 5.8 Q1843.7 5.5 1845 5.5 H1848.5 Q1850.5 5.5 1850.5 7.5 V11.3 Q1850.5 12.3 1850.1 12.6" fill="none" stroke="#8a8a8a" stroke-width="1"/><path d="M1887.2 5.4 L1896.8 15 M1896.8 5.4 L1887.2 15" stroke="#8a8a8a" stroke-width="1" fill="none"/><g filter="url(#ib)"><path d="M2.2 49.3 L12.3 50 V71.6 L2.2 72.4 Z" fill="#e4e4e6"/><path d="M3 49 L18 49 V71 H12.2 V52 Z" fill="#2c3848"/><rect x="8.6" y="62.5" width="2.4" height="1" fill="#9aa0a8"/><path d="M18 60.4 H27.6 M22.2 54.6 L28 60.4 L22.2 66.2" stroke="#e8895a" stroke-width="1.1" fill="none"/></g><g filter="url(#ib)"><path d="M59 54 H62.4 V75 H59 Z" fill="#eebd3a"/><path d="M65 49.3 H77 L82 54.5 V65 H65 Z" fill="#f3eccb"/><path d="M77 49.3 L82 54.5 H77 Z" fill="#cfc79a"/><rect x="67" y="53" width="7" height="0.9" fill="#d9d2ae"/><rect x="67" y="55.8" width="9" height="0.9" fill="#d9d2ae"/><rect x="67" y="58.6" width="12" height="0.9" fill="#d9d2ae"/><path d="M79.5 57.5 H83 V62 H79.5 Z" fill="#eebd3a"/><path d="M59 75 L64.5 61.5 H85.2 L80 75 Z" fill="#f3c845"/><path d="M59 75 V56 L62.4 56 V66 Z" fill="#eebd3a"/></g><g filter="url(#ib)"><path d="M128.3 49 H150.6 L154 52.6 V75 H128.3 Z" fill="#3b4561"/><rect x="133" y="49" width="16" height="9.2" fill="#e9eaec"/><path d="M139.6 49 H149 V56 H143.4 Z" fill="#b9bcc4"/><rect x="143.4" y="50.6" width="3.2" height="4.8" fill="#3b4561"/><rect x="144.4" y="51.6" width="1.2" height="2.8" fill="#b9bcc4"/><rect x="133" y="63" width="16" height="6.8" fill="#eeb82c"/><rect x="133" y="69.8" width="16" height="5.2" fill="#eef0f3"/><rect x="134.6" y="64.8" width="4.2" height="0.9" fill="#fbe9a8"/><rect x="134.6" y="66.8" width="7" height="0.9" fill="#fbe9a8"/></g><g filter="url(#ib)"><rect x="245" y="48.8" width="17.6" height="8" fill="#f2eed4"/><rect x="241.3" y="65" width="3.2" height="6.8" fill="#a9aec0"/><rect x="263.5" y="65" width="3.2" height="6.8" fill="#a9aec0"/><rect x="240.8" y="56.2" width="26.3" height="8.8" fill="#485580"/><rect x="245" y="65" width="17.6" height="9.4" fill="#f2eed4"/><rect x="247.6" y="68" width="12.2" height="0.8" fill="#d8d2a8"/><rect x="247.6" y="70.6" width="12.2" height="0.8" fill="#d8d2a8"/><circle cx="262.9" cy="60.7" r="1.7" fill="#a4d66a"/></g><g filter="url(#ib)"><path d="M370 49 L389 61.5 L370 74.4 Z" fill="#3a4354"/><path d="M373 55 L382.6 61.5 L373 68.3 Z" fill="#e9b31f"/></g><g filter="url(#ib)"><rect x="441" y="55.6" width="9.6" height="6.4" fill="#2c3a5a"/><path d="M436.2 52 Q439.5 48.6 442.8 52 L445.6 68 L433 68 Z" fill="#3c4d74"/><path d="M448.8 52 Q452.1 48.6 455.4 52 L458.8 68 L446.2 68 Z" fill="#3c4d74"/><circle cx="439.2" cy="67.2" r="6.2" fill="#5f86c8"/><circle cx="452.4" cy="67.2" r="6.2" fill="#5f86c8"/><circle cx="439.2" cy="67.4" r="4.4" fill="#8fb6ea"/><circle cx="452.4" cy="67.4" r="4.4" fill="#8fb6ea"/><path d="M436.6 69.6 L441.6 64.6 M449.8 69.6 L454.8 64.6" stroke="#bcd6f6" stroke-width="1.3"/></g><g filter="url(#ib)"><circle cx="504.05" cy="61.75" r="13.05" fill="#3a4056"/><clipPath id="sc"><circle cx="504.05" cy="61.75" r="13.05"/></clipPath><clipPath id="sc2"><rect x="490" y="48" width="28" height="14.2"/></clipPath><g clip-path="url(#sc)"><g clip-path="url(#sc2)"><circle cx="504.05" cy="61.5" r="9.2" fill="none" stroke="#eef0f6" stroke-width="1.1"/><circle cx="504.05" cy="61.5" r="10.3" fill="none" stroke="#eef0f6" stroke-width="1.5" stroke-dasharray="1.55 1.69"/></g><path d="M501.6 58.9 L497.4 54.6 M506.5 58.9 L510.7 54.6" stroke="#eef0f6" stroke-width="1.1"/><circle cx="495.7" cy="69.6" r="5.3" fill="#c6cacb"/><circle cx="495.7" cy="69.6" r="6.2" fill="none" stroke="#c6cacb" stroke-width="1.6" stroke-dasharray="2 1.9"/><circle cx="495.7" cy="69.8" r="2.1" fill="#3a4056"/><circle cx="512.2" cy="69.6" r="5.3" fill="#e8665a"/><circle cx="512.2" cy="69.6" r="6.2" fill="none" stroke="#e8665a" stroke-width="1.6" stroke-dasharray="2 1.9"/><circle cx="512.4" cy="69.8" r="2.1" fill="#3a4056"/><circle cx="504.05" cy="61.5" r="3.5" fill="#3a4056" stroke="#eef0f6" stroke-width="1.1"/></g></g><g filter="url(#ib)" fill="none"><circle cx="565.85" cy="61.9" r="11.6" stroke="#5a5c62" stroke-width="1"/><circle cx="565.85" cy="61.9" r="2.6" stroke="#55575d" stroke-width="1" fill="#fafafa"/><path d="M565.85 56 V58.4 M565.85 65.4 V67.8 M559.9 61.9 H562.3 M569.4 61.9 H571.8" stroke="#a6a8ac" stroke-width="1.5"/><circle cx="565.85" cy="50.3" r="1.1" fill="#5a5c62"/><circle cx="565.85" cy="73.5" r="1.1" fill="#5a5c62"/><circle cx="554.25" cy="61.9" r="1.1" fill="#5a5c62"/><circle cx="577.45" cy="61.9" r="1.1" fill="#5a5c62"/></g><g filter="url(#ib)"><path d="M639.4 68 L645.6 73.6" stroke="#3c3c3c" stroke-width="2" stroke-linecap="round"/><circle cx="633.8" cy="62" r="7.4" fill="#727272" stroke="#444" stroke-width="1.6"/><path d="M629.6 66.8 L638.6 57.8" stroke="#8e8e8e" stroke-width="2.2"/></g><g filter="url(#ib)"><rect x="695" y="49" width="19.8" height="25.6" fill="#8c8c8c"/><rect x="695" y="49" width="3.4" height="25.6" fill="#636363"/><rect x="701.8" y="53" width="9.6" height="5" fill="#c9c9c9"/><rect x="703.4" y="54.8" width="6.4" height="1.2" fill="#e6e6e6"/><path d="M717.2 52 H721 V70.5 L719.1 74.4 L717.2 70.5 Z" fill="#7c7c7c"/><rect x="717.2" y="49" width="3.8" height="3.4" fill="#5c5c5c"/><path d="M717.2 70.5 H721 L719.1 74.4 Z" fill="#b0b0b0"/></g><g filter="url(#ib)"><rect x="1850.6" y="56.6" width="18.6" height="18" fill="#2f7fd0"/><path d="M1860 49 V56.6" stroke="#f6e3b4" stroke-width="1.2"/><path d="M1860 56.6 V66.6 M1855.2 62.4 L1860 67 L1864.8 62.4" stroke="#b8d8a0" stroke-width="1.2" fill="none"/></g></svg>
<svg style="left:5px;top:431px" width="17" height="17" viewBox="5 431 17 17"><defs><radialGradient id="eg" cx="0.4" cy="0.35" r="0.7"><stop offset="0" stop-color="#f08a70"/><stop offset="1" stop-color="#e2573f"/></radialGradient></defs><circle cx="13.2" cy="438.9" r="6.8" fill="url(#eg)" stroke="#d9533c" stroke-width="0.6"/><rect x="12.5" y="434.6" width="1.5" height="5.6" rx="0.5" fill="#fff"/><rect x="12.5" y="441.4" width="1.5" height="1.6" rx="0.5" fill="#fff"/></svg>
<div style="left:899px;top:996px;width:1000px;height:8px;overflow:hidden"><span style="left:44.5px;top:3.74px;transform:scaleX(0.956)">Codewords 21</span><span style="left:506.1px;top:3.74px;transform:scaleX(0.918)">3.6 (A)</span></div>
<span style="left:21.3px;top:4.44px;color:#999999;transform:scaleX(0.9754);">Axicon Camera Verifier</span>
<span style="left:4.6px;top:25.14px;transform:scaleX(0.9047);">File</span>
<span style="left:36.3px;top:25.14px;transform:scaleX(0.9575);">View</span>
<span style="left:75.6px;top:25.14px;transform:scaleX(0.9019);">Reader</span>
<span style="left:125.3px;top:25.14px;transform:scaleX(0.9843);">Help</span>
<span style="left:3px;top:78.74px;transform:scaleX(1.0440);"><u>Q</u>uit</span>
<span style="left:41px;top:78.74px;transform:scaleX(0.9479);">L<u>o</u>ad scan...</span>
<span style="left:111px;top:78.74px;transform:scaleX(0.9084);"><u>S</u>ave scan...</span>
<span style="left:179px;top:78.74px;transform:scaleX(0.9635);"><u>P</u>rint Report: "Standard PDF"</span>
<span style="left:342px;top:78.74px;transform:scaleX(0.9591);">Start Scanning</span>
<span style="left:426px;top:78.74px;transform:scaleX(0.9668);">Decode</span>
<span style="left:479px;top:78.74px;transform:scaleX(0.9555);">Settings...</span>
<span style="left:538.5px;top:78.74px;transform:scaleX(0.9478);">Calibrate...</span>
<span style="left:602px;top:78.74px;color:#a0a0a0;transform:scaleX(0.9499);">Enable DPM</span>
<span style="left:679px;top:78.74px;color:#a0a0a0;transform:scaleX(0.9058);">User Data...</span>
<span style="left:1808.3px;top:78.74px;transform:scaleX(0.9703);">Check for updates...</span>
<span style="left:27.6px;top:431.84px;transform:scaleX(0.9441);">GS1 Healthcare (bedside)</span>
<span style="left:11.5px;top:462.94px;transform:scaleX(0.9066);">(01)05034367009036(17)260409(10)25109</span>
<span style="left:6.3px;top:492.64px;transform:scaleX(0.9197);">Status</span>
<span style="left:57.3px;top:492.64px;transform:scaleX(0.9766);">Element</span>
<span style="left:130.3px;top:492.64px;transform:scaleX(0.9727);">Value</span>
<span style="left:221.3px;top:492.64px;">Description</span>
<span style="left:751.5px;top:492.64px;transform:scaleX(0.9567);">Notes</span>
<span style="left:789.5px;top:492.64px;transform:scaleX(0.8876);">Errors</span>
<span style="left:826.5px;top:492.64px;transform:scaleX(0.9950);">Warnings</span>
<span style="left:5.5px;top:513.64px;transform:scaleX(0.8244);">Pass</span>
<span style="left:58.4px;top:514.44px;transform:scaleX(0.9042);">(01)</span>
<span style="left:131px;top:514.44px;transform:scaleX(0.8990);">05034367009036</span>
<span style="left:222.3px;top:514.44px;transform:scaleX(0.9838);">Global Trade Item Number (GTIN) [n2+n14]</span>
<span style="left:5.5px;top:535.64px;transform:scaleX(0.8244);">Pass</span>
<span style="left:58.4px;top:536.44px;transform:scaleX(0.9042);">(17)</span>
<span style="left:131px;top:536.44px;transform:scaleX(0.9590);">09/04/2026</span>
<span style="left:222.3px;top:536.44px;transform:scaleX(0.9779);">Expiration Date (YYMMDD) [n2+n6]</span>
<span style="left:752px;top:536.44px;">*</span>
<span style="left:5.5px;top:557.64px;transform:scaleX(0.8244);">Pass</span>
<span style="left:58.4px;top:558.44px;transform:scaleX(0.9042);">(10)</span>
<span style="left:131px;top:558.44px;transform:scaleX(0.8989);">25109</span>
<span style="left:222.3px;top:558.44px;transform:scaleX(0.9928);">Batch or Lot Number [n2+an..20]</span>
<span style="left:752px;top:558.44px;">*</span>
<span style="left:5.5px;top:579.64px;color:#fff;transform:scaleX(0.9047);">Fail</span>
<span style="left:58.4px;top:580.44px;color:#fff;transform:scaleX(0.9173);">Grade</span>
<span style="left:131px;top:580.44px;color:#fff;transform:scaleX(0.9158);">1.2 (D)</span>
<span style="left:222.3px;top:580.44px;color:#fff;transform:scaleX(0.9516);">Grade must be at least 1.5 (C)</span>
<span style="left:5.5px;top:601.64px;transform:scaleX(0.8244);">Pass</span>
<span style="left:58.4px;top:602.44px;transform:scaleX(0.9906);">Aperture</span>
<span style="left:131px;top:602.44px;transform:scaleX(0.9391);">200 µm (08)</span>
<span style="left:222.3px;top:602.44px;transform:scaleX(0.9576);">Required aperture: 200 µm (08)</span>
<span style="left:5.5px;top:623.64px;transform:scaleX(0.9944);">Warning</span>
<span style="left:58.4px;top:624.44px;transform:scaleX(0.9841);">X dimension</span>
<span style="left:131px;top:624.44px;transform:scaleX(0.9586);">252 µm</span>
<span style="left:222.3px;top:624.44px;transform:scaleX(0.9828);">Allowed X dimension range: 254 µm to 990 µm</span>
<span style="left:826px;top:624.44px;transform:scaleX(0.9000);">1</span>
<span style="left:5.5px;top:645.64px;transform:scaleX(0.9944);">Warning</span>
<span style="left:58.4px;top:646.44px;transform:scaleX(0.9874);">Y dimension</span>
<span style="left:131px;top:646.44px;transform:scaleX(0.9586);">252 µm</span>
<span style="left:222.3px;top:646.44px;transform:scaleX(0.9845);">Allowed Y dimension range: 254 µm to 990 µm</span>
<span style="left:826px;top:646.44px;transform:scaleX(0.9000);">1</span>
<span style="left:0px;top:1013.34px;transform:scaleX(0.9574);">Auto-saved &quot;C:\Users\DDENISON\Documents\axicon\scans\2d verifier\_0105034367009036172604091025109-20260211T105956.png&quot;</span>
<span style="left:1340.8px;top:114.11px;color:#fff;font-size:17px;font-weight:700;transform:scaleX(1.1915);">1.2/08/660 (D)</span>
<span style="left:1287px;top:154.11px;color:#fff;font-size:17px;font-weight:700;transform:scaleX(1.0863);">Application Validation: Fail</span>
<span style="left:903.3px;top:183.84px;transform:scaleX(0.9250);">General</span>
<span style="left:954.5px;top:185.84px;transform:scaleX(0.9274);">Reader</span>
<span style="left:1003px;top:185.84px;transform:scaleX(0.8955);">Scan</span>
<span style="left:910.5px;top:214.44px;color:#fff;font-weight:700;transform:scaleX(0.8774);">FNC1</span>
<span style="left:939.8px;top:214.44px;font-weight:700;letter-spacing:1.3px;transform:scaleX(1.0073);">0105034367009036172604091025109</span>
<span style="left:909.3px;top:240.64px;transform:scaleX(0.9372);">GS1 DataMatrix</span>
<span style="left:925.5px;top:267.44px;transform:scaleX(0.9143);">Pass grade</span>
<span style="left:1413.2px;top:267.44px;transform:scaleX(0.8569);">1.5</span>
<span style="left:925.5px;top:285.44px;transform:scaleX(0.9352);">Matrix Size</span>
<span style="left:1413.2px;top:285.44px;transform:scaleX(0.8654);">18x18</span>
<span style="left:925.5px;top:303.44px;transform:scaleX(1.0098);">Minimum Reflectance</span>
<span style="left:1413.2px;top:303.44px;transform:scaleX(0.9138);">4.7%</span>
<span style="left:925.5px;top:321.44px;transform:scaleX(0.9897);">Maximum Reflectance</span>
<span style="left:1413.2px;top:321.44px;transform:scaleX(0.9109);">80.3%</span>
<span style="left:925.5px;top:339.44px;transform:scaleX(0.9701);">X Dimension</span>
<span style="left:1413.2px;top:339.44px;transform:scaleX(0.9487);">252 µm</span>
<span style="left:925.5px;top:357.44px;transform:scaleX(0.9733);">Y Dimension</span>
<span style="left:1413.2px;top:357.44px;transform:scaleX(0.9487);">252 µm</span>
<span style="left:925.5px;top:375.44px;transform:scaleX(0.9428);">X Print Gain</span>
<span style="left:1413.2px;top:375.44px;transform:scaleX(0.9381);">85 µm, 33.7%</span>
<span style="left:925.5px;top:393.44px;transform:scaleX(0.9460);">Y Print Gain</span>
<span style="left:1413.2px;top:393.44px;transform:scaleX(0.9485);">11 µm, 4.5%</span>
<span style="left:925.5px;top:411.44px;transform:scaleX(0.9928);">Aperture</span>
<span style="left:1413.2px;top:411.44px;transform:scaleX(0.9487);">200 µm</span>
<span style="left:903.2px;top:456.44px;transform:scaleX(0.8562);">ISO</span>
<span style="left:951.5px;top:457.64px;transform:scaleX(0.9431);">Details</span>
<span style="left:925.5px;top:477.74px;transform:scaleX(1.0400);">Modulation</span>
<span style="left:1405.1px;top:477.74px;color:#fff;transform:scaleX(0.9180);">1.2 (D)</span>
<span style="left:943.5px;top:495.74px;transform:scaleX(0.9560);">Codewords 1</span>
<span style="left:1405.1px;top:495.74px;transform:scaleX(0.9180);">3.5 (A)</span>
<span style="left:943.5px;top:513.74px;transform:scaleX(0.9560);">Codewords 2</span>
<span style="left:1405.1px;top:513.74px;color:#fff;transform:scaleX(0.9180);">0.0 (F)</span>
<span style="left:961.5px;top:531.74px;transform:scaleX(1.0200);">Module Information 1</span>
<span style="left:1405.1px;top:531.74px;transform:scaleX(0.9180);">4.0 (A), 89.5%</span>
<span style="left:961.5px;top:549.74px;transform:scaleX(1.0200);">Module Information 2</span>
<span style="left:1405.1px;top:549.74px;color:#fff;transform:scaleX(0.9180);">1.4 (D), 24.0%</span>
<span style="left:961.5px;top:567.74px;transform:scaleX(1.0200);">Module Information 3</span>
<span style="left:1405.1px;top:567.74px;transform:scaleX(0.9180);">3.3 (B), 43.8%</span>
<span style="left:961.5px;top:585.74px;transform:scaleX(1.0200);">Module Information 4</span>
<span style="left:1405.1px;top:585.74px;transform:scaleX(0.9180);">4.0 (A), 58.4%</span>
<span style="left:961.5px;top:603.74px;transform:scaleX(1.0200);">Module Information 5</span>
<span style="left:1405.1px;top:603.74px;color:#fff;transform:scaleX(0.9180);">1.3 (D), 23.4%</span>
<span style="left:961.5px;top:621.74px;transform:scaleX(1.0200);">Module Information 6</span>
<span style="left:1405.1px;top:621.74px;color:#fff;transform:scaleX(0.9180);">0.0 (F), 11.2%</span>
<span style="left:961.5px;top:639.74px;transform:scaleX(1.0200);">Module Information 7</span>
<span style="left:1405.1px;top:639.74px;transform:scaleX(0.9180);">4.0 (A), 94.6%</span>
<span style="left:961.5px;top:657.74px;transform:scaleX(1.0200);">Module Information 8</span>
<span style="left:1405.1px;top:657.74px;transform:scaleX(0.9180);">4.0 (A), 97.5%</span>
<span style="left:943.5px;top:675.74px;transform:scaleX(0.9560);">Codewords 3</span>
<span style="left:1405.1px;top:675.74px;transform:scaleX(0.9180);">2.6 (B)</span>
<span style="left:943.5px;top:693.74px;transform:scaleX(0.9560);">Codewords 4</span>
<span style="left:1405.1px;top:693.74px;color:#fff;transform:scaleX(0.9180);">0.3 (F)</span>
<span style="left:943.5px;top:711.74px;transform:scaleX(0.9560);">Codewords 5</span>
<span style="left:1405.1px;top:711.74px;transform:scaleX(0.9180);">2.1 (C)</span>
<span style="left:943.5px;top:729.74px;transform:scaleX(0.9560);">Codewords 6</span>
<span style="left:1405.1px;top:729.74px;transform:scaleX(0.9180);">2.8 (B)</span>
<span style="left:943.5px;top:747.74px;transform:scaleX(0.9560);">Codewords 7</span>
<span style="left:1405.1px;top:747.74px;transform:scaleX(0.9180);">2.8 (B)</span>
<span style="left:943.5px;top:765.74px;transform:scaleX(0.9560);">Codewords 8</span>
<span style="left:1405.1px;top:765.74px;transform:scaleX(0.9180);">1.9 (C)</span>
<span style="left:943.5px;top:783.74px;transform:scaleX(0.9560);">Codewords 9</span>
<span style="left:1405.1px;top:783.74px;transform:scaleX(0.9180);">4.0 (A)</span>
<span style="left:943.5px;top:801.74px;transform:scaleX(0.9560);">Codewords 10</span>
<span style="left:1405.1px;top:801.74px;transform:scaleX(0.9180);">1.6 (C)</span>
<span style="left:943.5px;top:819.74px;transform:scaleX(0.9560);">Codewords 11</span>
<span style="left:1405.1px;top:819.74px;transform:scaleX(0.9180);">1.7 (C)</span>
<span style="left:943.5px;top:837.74px;transform:scaleX(0.9560);">Codewords 12</span>
<span style="left:1405.1px;top:837.74px;transform:scaleX(0.9180);">3.7 (A)</span>
<span style="left:943.5px;top:855.74px;transform:scaleX(0.9560);">Codewords 13</span>
<span style="left:1405.1px;top:855.74px;transform:scaleX(0.9180);">1.8 (C)</span>
<span style="left:943.5px;top:873.74px;transform:scaleX(0.9560);">Codewords 14</span>
<span style="left:1405.1px;top:873.74px;transform:scaleX(0.9180);">3.1 (B)</span>
<span style="left:943.5px;top:891.74px;transform:scaleX(0.9560);">Codewords 15</span>
<span style="left:1405.1px;top:891.74px;transform:scaleX(0.9180);">2.0 (C)</span>
<span style="left:943.5px;top:909.74px;transform:scaleX(0.9560);">Codewords 16</span>
<span style="left:1405.1px;top:909.74px;transform:scaleX(0.9180);">2.9 (B)</span>
<span style="left:943.5px;top:927.74px;transform:scaleX(0.9560);">Codewords 17</span>
<span style="left:1405.1px;top:927.74px;transform:scaleX(0.9180);">3.2 (B)</span>
<span style="left:943.5px;top:945.74px;transform:scaleX(0.9560);">Codewords 18</span>
<span style="left:1405.1px;top:945.74px;transform:scaleX(0.9180);">4.0 (A)</span>
<span style="left:943.5px;top:963.74px;transform:scaleX(0.9560);">Codewords 19</span>
<span style="left:1405.1px;top:963.74px;transform:scaleX(0.9180);">2.7 (B)</span>
<span style="left:943.5px;top:981.74px;transform:scaleX(0.9560);">Codewords 20</span>
<span style="left:1405.1px;top:981.74px;color:#fff;transform:scaleX(0.9180);">0.0 (F)</span>
</div></body></html>
